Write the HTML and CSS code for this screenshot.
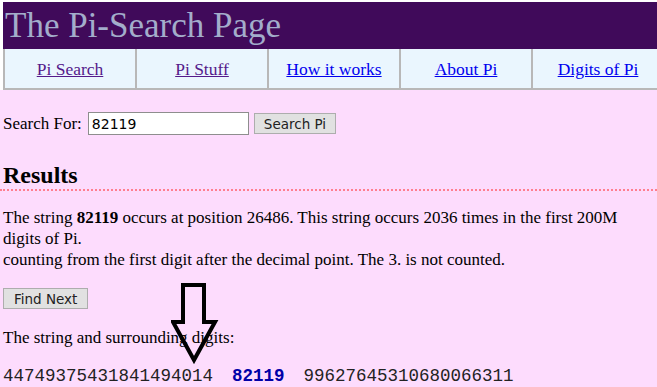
FILE: index.html
```html
<!DOCTYPE html>
<html lang="en">

<head>
    <meta charset="UTF-8">
    <meta name="viewport" content="width=device-width, initial-scale=1.0">
    <title>The Pi-Search Page</title>
    <link rel="stylesheet" href="styles.css">
</head>

<body>
    <div class="top">
        <div class="header">
            <h1>The Pi-Search Page</h1>
        </div>
        <div class="nav">
            <div class="nav-cell"><a href="#" class="visited">Pi Search</a></div>
            <div class="nav-cell"><a href="#" class="visited">Pi Stuff</a></div>
            <div class="nav-cell"><a href="#">How it works</a></div>
            <div class="nav-cell"><a href="#">About Pi</a></div>
            <div class="nav-cell"><a href="#">Digits of Pi</a></div>
        </div>
    </div>

    <div class="content">
        <form class="search-form">
            <label for="query">Search For:</label>
            <input type="text" id="query" name="query" value="82119">
            <button type="button" class="btn">Search Pi</button>
        </form>

        <h2 class="results-title">Results</h2>

        <p class="result-text">
            The string <b>82119</b> occurs at position 26486. This string occurs 2036 times in the first 200M digits of Pi.<br>
            counting from the first digit after the decimal point. The 3. is not counted.
        </p>

        <button type="button" class="btn find-next">Find Next</button>

        <p class="surround-label">The string and surrounding digits:</p>
        <div class="digits">44749375431841494014  <b>82119</b>  99627645310680066311</div>

        <!-- arrow drawn on top of the screenshot -->
        <svg class="arrow" width="56" height="86" viewBox="0 0 56 86">
            <polygon points="12,2 33,2 33,39 44,39 23,77 2,39 12,39" fill="none" stroke="#000" stroke-width="4" stroke-linejoin="miter"/>
        </svg>
    </div>
</body>

</html>
```

FILE: styles.css
```css
* {
    margin: 0;
    padding: 0;
    box-sizing: border-box;
}

html,
body {
    overflow: hidden;
}

body {
    font-family: 'Liberation Serif', 'Times New Roman', serif;
    font-size: 17px;
    background: #fddcfd;
    color: #000;
}

.top {
    background: #fff;
    padding: 2px 0 0 3px;
}

.header {
    background: #400a5a;
    height: 47px;
    padding-left: 2px;
}

.header h1 {
    font-weight: normal;
    font-size: 35px;
    line-height: 48px;
    color: #a3adcb;
    white-space: nowrap;
}

.nav {
    display: flex;
    width: 670px;
    background: #eaf6fe;
    border-bottom: 2px solid #b8b8b8;
}

.nav-cell {
    flex: 0 0 132px;
    height: 39px;
    border-left: 2px solid #b8b8b8;
    display: flex;
    align-items: center;
    justify-content: center;
    padding-top: 2px;
}

.nav-cell a {
    color: #0000ee;
    font-size: 17.5px;
}

.nav-cell a.visited {
    color: #551a8b;
}

.content {
    position: relative;
    padding: 22px 0 0 3px;
}

.search-form {
    display: flex;
    align-items: center;
    height: 23px;
}

.search-form label {
    margin-right: 6px;
}

.search-form input {
    width: 161px;
    height: 23px;
    border: 1px solid #8e8e8e;
    background: #fff;
    padding: 0 3px;
    font-family: 'DejaVu Sans', 'Liberation Sans', sans-serif;
    font-size: 14px;
    margin-right: 5px;
}

.btn {
    font-family: 'DejaVu Sans', 'Liberation Sans', sans-serif;
    font-size: 13.5px;
    color: #222;
    background: #e1e1e1;
    border: 1px solid #adadad;
    height: 21px;
    padding: 0 9px;
}

.results-title {
    font-size: 24px;
    font-weight: bold;
    margin-top: 27px;
    line-height: 27px;
    margin-left: -3px;
    padding-left: 3px;
    border-bottom: 2px dotted #ff7f90;
}

.result-text {
    margin-top: 16px;
    line-height: 21px;
    width: 650px;
}

.find-next {
    margin-top: 18px;
    height: 21px;
    padding: 0 10px;
}

.surround-label {
    margin-top: 18px;
    line-height: 21px;
}

.digits {
    margin-top: 18px;
    font-family: 'Liberation Mono', 'Courier New', monospace;
    font-size: 17.5px;
    white-space: pre;
    word-spacing: -1px;
    color: #222;
    line-height: 20px;
}

.digits b {
    color: #0000a8;
}

.arrow {
    position: absolute;
    left: 171px;
    top: 193px;
}
```
